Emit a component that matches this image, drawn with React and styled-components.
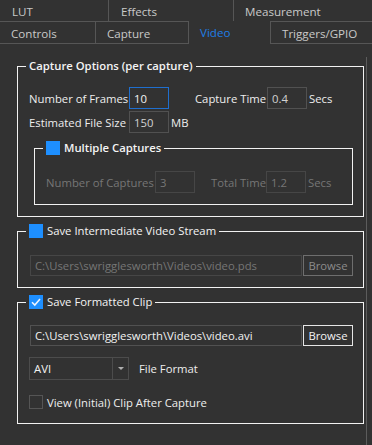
import React from "react";
import styled, { createGlobalStyle } from "styled-components";

const Global = createGlobalStyle`
  html, body { margin: 0; padding: 0; background: #323232; }
  body { font-family: "Open Sans", "Noto Sans", "DejaVu Sans", sans-serif; font-size: 11.3px; }
  * { box-sizing: border-box; }
`;

const Root = styled.div`
  width: 372px;
  height: 445px;
  overflow: hidden;
  background: #323232;
  color: #f0f0f0;
  display: flex;
  flex-direction: column;
`;

const TabRow = styled.div`
  display: flex;
  height: ${(p) => p.$h}px;
  flex-shrink: 0;
`;

const Tab = styled.div`
  width: ${(p) => p.$w}px;
  flex-shrink: 0;
  padding-left: ${(p) => p.$pl || 11}px;
  color: ${(p) => (p.$active ? "#1f7ee6" : "#c9c9c9")};
  font-size: 11.6px;
  line-height: ${(p) => p.$lh}px;
  border-right: ${(p) => (p.$br ? "1px solid #565656" : "none")};
  border-left: ${(p) => (p.$bl ? "1px solid #565656" : "none")};
  border-top: ${(p) => (p.$bt ? "1px solid #565656" : "none")};
  border-bottom: ${(p) => (p.$bt ? "1px solid #565656" : "none")};
  white-space: nowrap;
`;

const Body = styled.div`
  flex: 1;
  display: flex;
`;

const Main = styled.div`
  width: 364px;
  padding: 14px 0 0 17px;
  display: flex;
  flex-direction: column;
`;

const ScrollEdge = styled.div`
  width: 1px;
  margin-left: 2px;
  margin-top: 13px;
  background: #5c5c5c;
`;

const Group = styled.fieldset`
  margin: ${(p) => p.$m || "0"};
  padding: 0;
  border: 1px solid #f2f2f2;
  min-width: 0;
`;

const GroupBody = styled.div`
  padding: ${(p) => p.$pad};
  display: flex;
  flex-direction: column;
`;

const Legend = styled.legend`
  margin-left: 8px;
  padding: 0 3px;
  height: 16px;
  display: flex;
  align-items: center;
  gap: 4px;
  line-height: 16px;
  font-size: 11.3px;
  font-weight: ${(p) => (p.$bold ? 600 : 400)};
  color: #f4f4f4;
  white-space: nowrap;
`;

const Row = styled.div`
  display: flex;
  align-items: center;
  height: ${(p) => p.$h || 22}px;
  margin-top: ${(p) => p.$mt || 0}px;
`;

const Label = styled.span`
  width: ${(p) => (p.$w ? `${p.$w}px` : "auto")};
  margin-left: ${(p) => p.$ml || 0}px;
  flex-shrink: 0;
  color: ${(p) => (p.$disabled ? "#767676" : "#eeeeee")};
  white-space: nowrap;
`;

const TextBox = styled.div`
  width: ${(p) => p.$w}px;
  height: ${(p) => p.$h || 22}px;
  flex-shrink: 0;
  margin-left: ${(p) => p.$ml || 0}px;
  border: 1px solid ${(p) => (p.$focus ? "#1f6fcf" : p.$disabled ? "#464646" : "#515151")};
  padding-left: ${(p) => p.$pl || 4}px;
  display: flex;
  align-items: center;
  color: ${(p) => (p.$disabled ? "#767676" : p.$dim ? "#d2d2d2" : "#f2f2f2")};
  white-space: nowrap;
  overflow: hidden;
`;

const Button = styled.div`
  width: 50px;
  height: 21px;
  margin-left: 1px;
  flex-shrink: 0;
  border: 1px solid ${(p) => (p.$disabled ? "#6e6e6e" : "#e6e6e6")};
  color: ${(p) => (p.$disabled ? "#8c8c8c" : "#f2f2f2")};
  display: flex;
  align-items: center;
  justify-content: center;
`;

const Check = styled.div`
  width: 14px;
  height: 14px;
  flex-shrink: 0;
  background: ${(p) => (p.$filled ? "#1e8fff" : "transparent")};
  border: ${(p) => (p.$filled ? "none" : "1px solid #555555")};
  display: flex;
  align-items: center;
  justify-content: center;
`;

const Combo = styled.div`
  width: 100px;
  height: 23px;
  border: 1px solid #4c4c4c;
  display: flex;
  flex-shrink: 0;
`;

const ComboText = styled.div`
  flex: 1;
  padding-left: 4px;
  display: flex;
  align-items: center;
  color: #f2f2f2;
`;

const ComboButton = styled.div`
  width: 16px;
  border-left: 1px solid #4c4c4c;
  display: flex;
  align-items: center;
  justify-content: center;
`;

const Arrow = styled.div`
  width: 0;
  height: 0;
  border-left: 3px solid transparent;
  border-right: 3px solid transparent;
  border-top: 3px solid #b0b0b0;
`;

const Tick = () => (
  <svg width="14" height="14" viewBox="0 0 14 14">
    <path d="M3 7.2 L5.8 10 L11 4" fill="none" stroke="#eef4ff" strokeWidth="1.6" />
  </svg>
);

export default function App() {
  return (
    <Root>
      <Global />
      <TabRow $h={21}>
        <Tab $w={109} $pl={12} $lh={23} $br>LUT</Tab>
        <Tab $w={125} $pl={12} $lh={23} $br>Effects</Tab>
        <Tab $w={138} $pl={11} $lh={23}>Measurement</Tab>
      </TabRow>
      <TabRow $h={23}>
        <Tab $w={96} $lh={23} $bt $br>Controls</Tab>
        <Tab $w={93} $lh={23} $bt $br>Capture</Tab>
        <Tab $w={81} $lh={24} $active>Video</Tab>
        <Tab $w={102} $lh={23} $bt $bl>Triggers/GPIO</Tab>
      </TabRow>
      <Body>
        <Main>
          <Group>
            <Legend $bold>Capture Options (per capture)</Legend>
            <GroupBody $pad="13px 0 11px 11px">
              <Row>
                <Label $w={100}>Number of Frames</Label>
                <TextBox $w={40} $focus>10</TextBox>
                <Label $w={72} $ml={26}>Capture Time</Label>
                <TextBox $w={40} $dim>0.4</TextBox>
                <Label $ml={2}>Secs</Label>
              </Row>
              <Row $mt={2}>
                <Label $w={100}>Estimated File Size</Label>
                <TextBox $w={40} $dim>150</TextBox>
                <Label $ml={2}>MB</Label>
              </Row>
              <Group $m="7px 10px 0 5px">
                <Legend $bold>
                  <Check $filled />
                  Multiple Captures
                </Legend>
                <GroupBody $pad="15px 0 11px 11px">
                  <Row>
                    <Label $w={109} $disabled>Number of Captures</Label>
                    <TextBox $w={40} $disabled>3</TextBox>
                    <Label $w={55} $ml={16} $disabled>Total Time</Label>
                    <TextBox $w={40} $disabled>1.2</TextBox>
                    <Label $ml={2} $disabled>Secs</Label>
                  </Row>
                </GroupBody>
              </Group>
            </GroupBody>
          </Group>

          <Group $m="6px 0 0 0">
            <Legend>
              <Check $filled />
              Save Intermediate Video Stream
            </Legend>
            <GroupBody $pad="16px 0 11px 12px">
              <Row $h={21}>
                <TextBox $w={272} $h={21} $disabled>C:\Users\swrigglesworth\Videos\video.pds</TextBox>
                <Button $disabled>Browse</Button>
              </Row>
            </GroupBody>
          </Group>

          <Group $m="6px 0 0 0">
            <Legend>
              <Check $filled>
                <Tick />
              </Check>
              Save Formatted Clip
            </Legend>
            <GroupBody $pad="15px 0 13px 11px">
              <Row $h={21}>
                <TextBox $w={272} $h={21} $ml={1}>C:\Users\swrigglesworth\Videos\video.avi</TextBox>
                <Button>Browse</Button>
              </Row>
              <Row $h={23} $mt={11}>
                <Combo>
                  <ComboText>AVI</ComboText>
                  <ComboButton>
                    <Arrow />
                  </ComboButton>
                </Combo>
                <Label $ml={10}>File Format</Label>
              </Row>
              <Row $h={16} $mt={14}>
                <Check />
                <Label $ml={4}>View (Initial) Clip After Capture</Label>
              </Row>
            </GroupBody>
          </Group>
        </Main>
        <ScrollEdge />
      </Body>
    </Root>
  );
}
